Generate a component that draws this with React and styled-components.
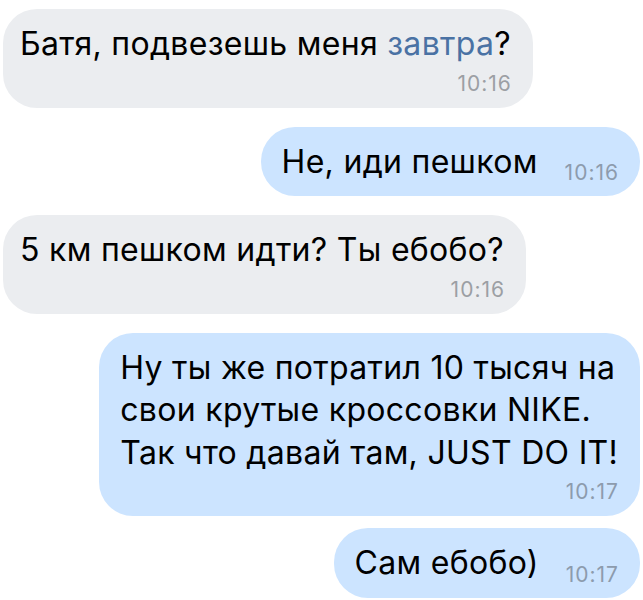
import React from 'react';
import styled, { createGlobalStyle } from 'styled-components';

const GlobalStyle = createGlobalStyle`
    html, body {
        margin: 0;
        padding: 0;
        background: #ffffff;
    }
    body {
        font-family: Inter, "Liberation Sans", Arial, sans-serif;
        -webkit-font-smoothing: antialiased;
    }
`;

const StyledChat = styled.div`
    width: 643px;
    height: 600px;
    box-sizing: border-box;
    padding: 9px 3px 0 3px;
    display: flex;
    flex-direction: column;
    overflow: hidden;
`;

const Row = styled.div`
    display: flex;
    justify-content: ${(p) => (p.$out ? 'flex-end' : 'flex-start')};
    margin-top: ${(p) => p.$gap}px;
`;

const Bubble = styled.div`
    box-sizing: border-box;
    padding: ${(p) => (p.$inline ? '14px 22px 13px' : '14px 22px 11px')};
    padding-left: ${(p) => (p.$out ? '21px' : '17px')};
    border-radius: 34px;
    background: ${(p) => (p.$out ? '#cce4ff' : '#ebedf0')};
    color: #000000;
    font-size: 32px;
    line-height: 42.5px;
    letter-spacing: 0.3px;
    display: flex;
    flex-direction: ${(p) => (p.$inline ? 'row' : 'column')};
    align-items: ${(p) => (p.$inline ? 'flex-end' : 'stretch')};
`;

const Text = styled.div`
    white-space: pre-line;
`;

const Link = styled.span`
    color: #4a72a4;
`;

const Time = styled.div`
    font-size: 21px;
    line-height: 26px;
    letter-spacing: 1px;
    color: ${(p) => (p.$out ? '#8d9bad' : '#9c9fa4')};
    text-align: right;
    margin: ${(p) => (p.$inline ? '0 -1px -3px 27px' : '5px -1px 0 0')};
`;

const messages = [
    { id: 1, out: false, gap: 0, text: <>Батя, подвезешь меня <Link>завтра</Link>?</>, time: '10:16' },
    { id: 2, out: true, gap: 19, inline: true, text: 'Не, иди пешком', time: '10:16' },
    { id: 3, out: false, gap: 19, text: '5 км пешком идти? Ты ебобо?', time: '10:16' },
    {
        id: 4,
        out: true,
        gap: 19,
        text: 'Ну ты же потратил 10 тысяч на\nсвои крутые кроссовки NIKE.\nТак что давай там, JUST DO IT!',
        time: '10:17',
    },
    { id: 5, out: true, gap: 12, inline: true, text: 'Сам ебобо)', time: '10:17' },
];

const App = () => {
    return (
        <>
            <GlobalStyle />
            <StyledChat>
                {messages.map((m) => (
                    <Row key={m.id} $out={m.out} $gap={m.gap}>
                        <Bubble $out={m.out} $inline={m.inline}>
                            <Text>{m.text}</Text>
                            <Time $out={m.out} $inline={m.inline}>{m.time}</Time>
                        </Bubble>
                    </Row>
                ))}
            </StyledChat>
        </>
    );
};

export default App;
